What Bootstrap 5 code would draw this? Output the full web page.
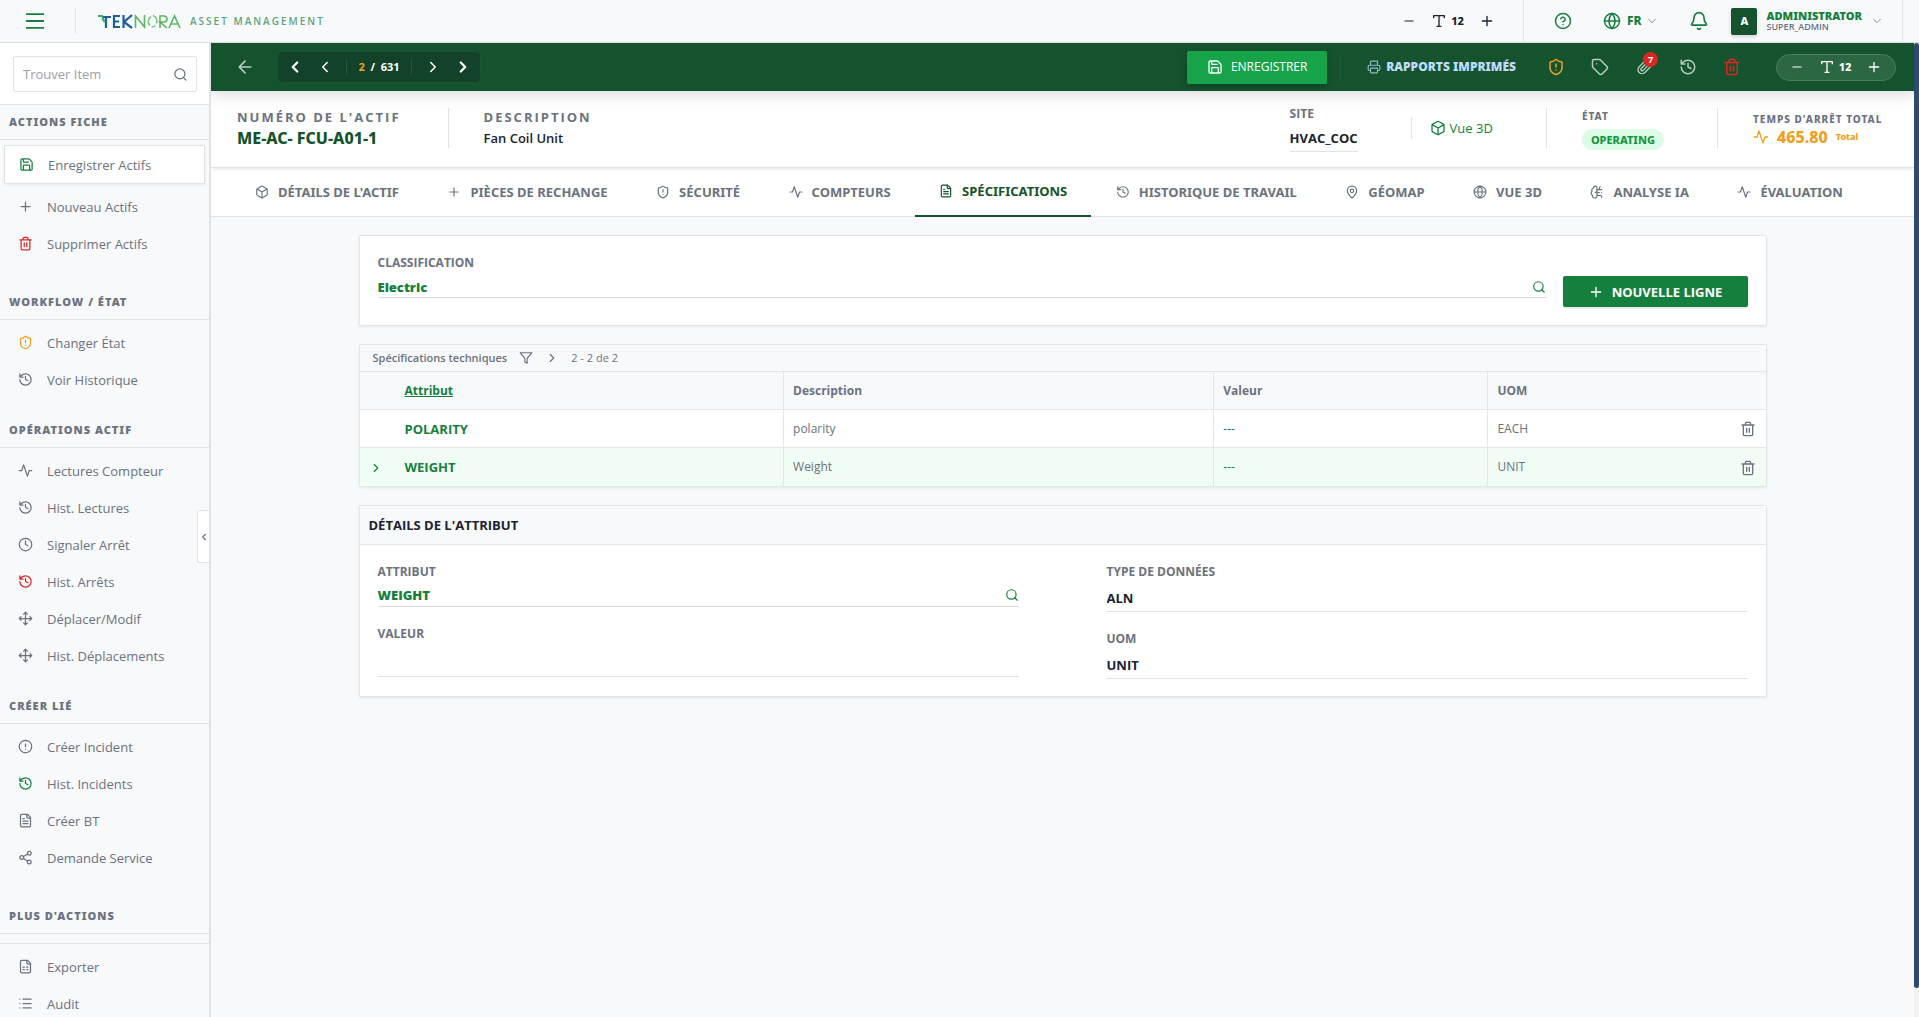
<!DOCTYPE html>
<html lang="fr">
<head>
<meta charset="utf-8">
<meta name="viewport" content="width=device-width, initial-scale=1">
<title>Teknora – Asset Management</title>
<link href="https://cdn.jsdelivr.net/npm/bootstrap@5.3.0/dist/css/bootstrap.min.css" rel="stylesheet">
<style>
:root{--ink:#1a2332;--mute:#6b7280;--line:#dfe3e8;--green:#15803d;--deep:#14532d;--page:#f8f9fb;--amber:#f0a020;--red:#dc2626}
body{font-family:"Open Sans","Noto Sans",sans-serif;font-size:12px;line-height:18px;color:var(--ink);background:var(--page);height:100vh;overflow:hidden}
a{text-decoration:none;color:inherit}
:where(button.plain){border:0;background:none;padding:0;color:inherit;display:inline-flex;align-items:center;justify-content:center;vertical-align:middle}
.ic{width:16px;height:16px;fill:none;stroke:currentColor;stroke-width:2;stroke-linecap:round;stroke-linejoin:round;flex:none}
.ic-s{width:14px;height:14px}.ic-m{width:18px;height:18px}.ic-xs{width:10px;height:10px}.ic-l{width:20px;height:20px}.ic-xl{width:22px;height:22px}
.ic-bold{stroke-width:3}
.vr-line{width:1px;background:var(--line);flex:none}
.green{color:var(--green)}.mute{color:var(--mute)}.deep{color:var(--deep)}.amber{color:var(--amber)}.red{color:var(--red)}
.heavy{font-family:"Noto Sans","Open Sans",sans-serif;font-weight:800}
/* top bar */
.topbar{height:43px;border-bottom:1px solid #d9e0e3;background:var(--page);flex:none}
.menu{width:75px;padding-right:6px!important;flex:none}
.brand{padding-left:22px;gap:8px}
.logo{width:84px;height:16px;flex:none}
.tagline{font-size:10px;font-weight:600;letter-spacing:2px;color:#5fa37c}
.zoomer{gap:15px}.zoomer .heavy{font-size:11px;margin-left:-11px}
.topbar .zoomer{padding-right:28px}
.account{padding:0 20px 0 30px}
.lang{gap:6px;margin:0 32px 0 31px!important}
.profile{margin-left:22px!important;text-align:left}
.avatar{width:26px;height:27px;background:var(--deep);color:#fff;font-size:11px;border-radius:2px;box-shadow:0 2px 4px rgba(0,0,0,.15);margin-right:9px}
.who{line-height:11px;margin-right:10px}.who .heavy{font-size:11px;font-weight:900}.who .mute{font-size:9px;font-weight:600}
/* sidebar */
.side{width:211px;border-right:2px solid var(--line);background:var(--page);flex:none;overflow:hidden;position:relative}
.finder{padding:13px 12px 12px 13px;background:#fff;border-bottom:1px solid var(--line)}
.finder .box{height:36px;border:1px solid var(--line);border-radius:2px;padding:0 8px 0 9px}
.finder input{border:0;outline:0;min-width:0;flex:1;font-size:13px;padding:0;background:none}
.finder input::placeholder{color:#9aa1ab;opacity:1}
.side h2{margin:0;height:35px;line-height:34px;padding-left:9px;border-bottom:1px solid var(--line);font-size:11px;font-family:"Noto Sans",sans-serif;font-weight:900;letter-spacing:1px;color:var(--mute)}
.side ul{list-style:none;margin:0;padding:4px 4px 15px}
.side ul.wide{padding-bottom:23px}
.side li a{display:flex;align-items:center;height:37px;padding-left:14px;gap:14px;font-size:13px;font-weight:500;color:var(--mute)}
.side li a.on{height:39px;margin:1px 0 4px;background:#fff;border:1px solid var(--line);border-radius:2px;box-shadow:0 1px 3px rgba(0,0,0,.08)}
.side .ic{width:15px;height:15px}
.side .ruled{border-top:1px solid var(--line);margin-top:9px}
.fold{position:absolute;right:0;top:467px;width:12px;height:53px;background:#fff;border:1px solid var(--line);border-right:0;border-radius:2px 0 0 2px}
.side .fold .ic{width:10px;height:10px}
/* record bar */
.recbar{height:48px;background:var(--deep);color:#b9ccbf;padding:0 18px 0 24px;flex:none;box-shadow:0 4px 14px rgba(0,0,0,.14);position:relative;z-index:2}
.pager{height:32px;width:204px;background:#12422a;border:1px solid #1d5233;border-radius:5px;margin-left:22px;padding:0 8px;color:#fff;font-size:11px;font-weight:700}
.recbar .vr-line{height:16px;background:#27573a}
.recbar .vr-line.tall{height:26px;margin:0 26px 0 13px}
.save{height:33px;width:140px;background:#16a34a;color:#fff;border:0;border-radius:2px;font-size:12px;box-shadow:0 3px 6px rgba(0,0,0,.2)}
.reports{color:#bfdbfe;gap:5px;margin-right:18px;font-weight:900}.reports .ic{color:#93b5c9}
.tools{margin-right:22px}.tools button{width:44px}
.count{position:absolute;top:-7px;right:8px;width:15px;height:15px;border-radius:8px;background:var(--red);color:#fff;font-size:9px;line-height:15px;font-weight:700;text-align:center}
.pill{height:27px;width:120px;border-radius:14px;background:#2c6743;border:1px solid #4a7e5e;color:#fff}
/* record header */
.rechead{height:77px;background:#fff;border-bottom:1px solid #e0e2e6;padding:0 27px 2px 26px;flex:none;box-shadow:0 1px 4px rgba(0,0,0,.1);position:relative;z-index:1}
.rechead .vr-line{height:40px;margin:0 35px 0 53px}
.rechead .vr-line.first{margin-left:47px}
.rechead .vr-line.short{height:22px;margin-right:18px}
.cap{font-weight:700;letter-spacing:2px;font-size:13px;line-height:21px;color:var(--mute)}
.cap-s{font-family:"Noto Sans",sans-serif;font-weight:800;letter-spacing:1px;font-size:10px;line-height:18px;color:var(--mute)}
.num{font-size:16px;line-height:21px}
.unit{font-size:13px;line-height:21px;font-weight:600}
.site{width:68px}
.view{font-size:13px}
.stop{min-width:134px}
.status{background:#dcfce7;color:#16963f;font-size:11px;line-height:21px;border-radius:10px;padding:0 9px}
.down{font-size:16px;gap:8px}
.down .tot{font-size:9px}
/* tabs */
.rectabs{height:49px;background:#fff;border-bottom:1px solid #e0e2e6;padding:0 47px 0 20px;flex:none}
.rectabs a{height:49px;padding:0 24px 2px;gap:9px;display:flex;align-items:center;font-family:"Noto Sans",sans-serif;font-size:13px;font-weight:700;color:var(--mute);white-space:nowrap}
.rectabs a.on{color:var(--deep);border-bottom:2px solid var(--deep)}
/* content */
.stage{padding:18px}
.wrap{max-width:1408px;margin:0 auto}
.panel{background:#fff;border:1px solid #e3e6ea;border-radius:2px;box-shadow:0 1px 3px rgba(0,0,0,.08);margin-bottom:18px}
.lbl{font-size:12px;font-weight:700;color:var(--mute);line-height:18px;display:block;margin-bottom:4px}
.site .lbl{margin-bottom:2px}
.fld+.lbl,.look+.lbl{margin-top:18px}
.fld{border:0;border-bottom:1px solid var(--line);width:100%;height:27px;font-size:13px;font-weight:700;color:var(--ink);padding:0;background:none;outline:0;border-radius:0}
.fld.tall{height:30px}
.look{border-bottom:1px solid #d5dadf}.look .fld{border:0;height:21px;color:var(--green);font-weight:800}
.classif{padding:18px;gap:17px}
.newline{width:185px;height:31px;background:var(--green);color:#fff;border:0;border-radius:2px;font-weight:700;font-size:13px;margin-top:22px;flex:none;box-shadow:0 1px 3px rgba(0,0,0,.15)}
.bar{height:26px;background:var(--page);padding-left:13px;gap:12px;font-size:11px;color:var(--mute)}
.spec{table-layout:fixed;width:100%;margin:0;font-size:12px}
.spec th,.spec td{height:38px;padding:0 10px 0 9px;border-top:1px solid #e3e6ea;vertical-align:middle}
.spec th+th,.spec td+td{border-left:1px solid #e3e6ea}
.spec tr>.nl.nl{border-left:0}
.spec th{background:var(--page);color:var(--mute);font-weight:700}
.spec td{color:var(--mute)}.spec td.key{color:var(--green);font-weight:700;font-size:13px}.spec td.green{color:var(--green)}
.spec tr.sel td{background:#f0fdf4}
.phead{height:39px;line-height:38px;margin:0;background:var(--page);border-bottom:1px solid #e3e6ea;font-size:13px;font-weight:700;padding-left:9px}
.pair{display:grid;grid-template-columns:1fr 1fr;column-gap:88px;padding:18px 18px 17px}
.scroll{width:5px;background:#f1f1f1;flex:none}.scroll i{display:block;height:97%;background:#2c4a73;border-radius:3px}
</style>
<script src="https://cdn.jsdelivr.net/npm/bootstrap@5.3.0/dist/js/bootstrap.bundle.min.js"></script>
</head>
<body class="d-flex flex-column">
<svg width="0" height="0" class="position-absolute" aria-hidden="true">
<symbol id="menu" viewBox="0 0 24 24"><path d="M3 4.500h18M3 12h18M3 19.500h18"/></symbol>
<symbol id="minus" viewBox="0 0 24 24"><path d="M5 12h14"/></symbol>
<symbol id="plus" viewBox="0 0 24 24"><path d="M5 12h14M12 5v14"/></symbol>
<symbol id="type" viewBox="0 0 24 24"><path d="M4 7V4h16v3M9 20h6M12 4v16"/></symbol>
<symbol id="help" viewBox="0 0 24 24"><circle cx="12" cy="12" r="10"/><path d="M9.1 9a3 3 0 0 1 5.8 1c0 2-3 3-3 3M12 17h.01"/></symbol>
<symbol id="globe" viewBox="0 0 24 24"><circle cx="12" cy="12" r="10"/><path d="M12 2a14.5 14.5 0 0 0 0 20 14.5 14.5 0 0 0 0-20M2 12h20"/></symbol>
<symbol id="cd" viewBox="0 0 24 24"><path d="m4 8 8 8 8-8"/></symbol>
<symbol id="cl" viewBox="0 0 24 24"><path d="m15 18-6-6 6-6"/></symbol>
<symbol id="cr" viewBox="0 0 24 24"><path d="m9 18 6-6-6-6"/></symbol>
<symbol id="bell" viewBox="0 0 24 24"><path d="M10.3 21a2 2 0 0 0 3.4 0M3.3 15.3A1 1 0 0 0 4 17h16a1 1 0 0 0 .7-1.7C19.400 14 18 12.500 18 8A6 6 0 0 0 6 8c0 4.500-1.400 6-2.700 7.300"/></symbol>
<symbol id="search" viewBox="0 0 24 24"><circle cx="11" cy="11" r="8"/><path d="m21 21-4.300-4.300"/></symbol>
<symbol id="save" viewBox="0 0 24 24"><path d="M15.200 3a2 2 0 0 1 1.400.6l3.800 3.800a2 2 0 0 1 .6 1.400V19a2 2 0 0 1-2 2H5a2 2 0 0 1-2-2V5a2 2 0 0 1 2-2zM17 21v-7a1 1 0 0 0-1-1H8a1 1 0 0 0-1 1v7M7 3v4a1 1 0 0 0 1 1h7"/></symbol>
<symbol id="trash" viewBox="0 0 24 24"><path d="M3 6h18M19 6v14a2 2 0 0 1-2 2H7a2 2 0 0 1-2-2V6M8 6V4a2 2 0 0 1 2-2h4a2 2 0 0 1 2 2v2M10 11v6M14 11v6"/></symbol>
<symbol id="shield" viewBox="0 0 24 24"><path d="M20 13c0 5-3.500 7.500-7.700 9a1 1 0 0 1-.6 0C7.500 20.500 4 18 4 13V6a1 1 0 0 1 1-1c2 0 4.500-1.200 6.200-2.700a1.200 1.200 0 0 1 1.600 0C14.500 3.800 17 5 19 5a1 1 0 0 1 1 1zM12 8v4M12 16h.01"/></symbol>
<symbol id="hist" viewBox="0 0 24 24"><path d="M3 12a9 9 0 1 0 9-9 9.800 9.800 0 0 0-6.700 2.700L3 8M3 3v5h5M12 7v5l4 2"/></symbol>
<symbol id="pulse" viewBox="0 0 24 24"><path d="M22 12h-4l-3 9L9 3l-3 9H2"/></symbol>
<symbol id="clock" viewBox="0 0 24 24"><circle cx="12" cy="12" r="10"/><path d="M12 6v6l4 2"/></symbol>
<symbol id="move" viewBox="0 0 24 24"><path d="M12 2v20M2 12h20M15 19l-3 3-3-3M19 9l3 3-3 3M5 9l-3 3 3 3M9 5l3-3 3 3"/></symbol>
<symbol id="alert" viewBox="0 0 24 24"><circle cx="12" cy="12" r="10"/><path d="M12 8v4M12 16h.01"/></symbol>
<symbol id="file" viewBox="0 0 24 24"><path d="M15 2H6a2 2 0 0 0-2 2v16a2 2 0 0 0 2 2h12a2 2 0 0 0 2-2V7zM14 2v4a2 2 0 0 0 2 2h4M10 9H8M16 13H8M16 17H8"/></symbol>
<symbol id="sheet" viewBox="0 0 24 24"><path d="M15 2H6a2 2 0 0 0-2 2v16a2 2 0 0 0 2 2h12a2 2 0 0 0 2-2V7zM14 2v4a2 2 0 0 0 2 2h4M8 13h2M14 13h2M8 17h2M14 17h2"/></symbol>
<symbol id="share" viewBox="0 0 24 24"><circle cx="18" cy="5" r="3"/><circle cx="6" cy="12" r="3"/><circle cx="18" cy="19" r="3"/><path d="m8.600 13.500 6.800 4M15.400 6.500l-6.800 4"/></symbol>
<symbol id="list" viewBox="0 0 24 24"><path d="M3 5h.01M3 12h.01M3 19h.01M8 5h13M8 12h13M8 19h13"/></symbol>
<symbol id="back" viewBox="0 0 24 24"><path d="m12 19-7-7 7-7M19 12H5"/></symbol>
<symbol id="print" viewBox="0 0 24 24"><path d="M6 18H4a2 2 0 0 1-2-2v-5a2 2 0 0 1 2-2h16a2 2 0 0 1 2 2v5a2 2 0 0 1-2 2h-2M6 9V3a1 1 0 0 1 1-1h10a1 1 0 0 1 1 1v6M7 14h10a1 1 0 0 1 1 1v6a1 1 0 0 1-1 1H7a1 1 0 0 1-1-1v-6a1 1 0 0 1 1-1"/></symbol>
<symbol id="tag" viewBox="0 0 24 24"><path d="M12.600 2.600A2 2 0 0 0 11.200 2H4a2 2 0 0 0-2 2v7.200a2 2 0 0 0 .6 1.400l8.700 8.700a2.400 2.400 0 0 0 3.400 0l6.600-6.600a2.400 2.400 0 0 0 0-3.400zM7.500 7.500h.01"/></symbol>
<symbol id="clip" viewBox="0 0 24 24"><path d="m16 6-8.400 8.600a2 2 0 0 0 2.800 2.800l8.400-8.600a4 4 0 1 0-5.600-5.600l-8.400 8.500a6 6 0 1 0 8.500 8.500l8.400-8.600"/></symbol>
<symbol id="box" viewBox="0 0 24 24"><path d="M21 8a2 2 0 0 0-1-1.700l-7-4a2 2 0 0 0-2 0l-7 4A2 2 0 0 0 3 8v8a2 2 0 0 0 1 1.700l7 4a2 2 0 0 0 2 0l7-4a2 2 0 0 0 1-1.700zM3.300 7l8.700 5 8.700-5M12 22V12"/></symbol>
<symbol id="pin" viewBox="0 0 24 24"><path d="M20 10c0 5-5.500 10.200-7.400 11.800a1 1 0 0 1-1.200 0C9.500 20.200 4 15 4 10a8 8 0 0 1 16 0"/><circle cx="12" cy="10" r="3"/></symbol>
<symbol id="brain" viewBox="0 0 24 24"><path d="M12 5a3 3 0 1 0-6 .1 4 4 0 0 0-2.500 5.800 4 4 0 0 0 .6 6.600A4 4 0 1 0 12 18zM9 13a4.500 4.500 0 0 0 3-4M12 13h4M12 18h6a2 2 0 0 1 2 2v1M12 8h8M16 8V5a2 2 0 0 1 2-2M16 13h.01M20 13h.01"/></symbol>
<symbol id="funnel" viewBox="0 0 24 24"><path d="M22 3H2l8 9.500V19l4 2v-8.500z"/></symbol>
</svg>

<header class="topbar d-flex align-items-stretch">
  <button class="plain menu green" aria-label="Menu"><svg class="ic ic-xl"><use href="#menu"/></svg></button>
  <div class="vr-line my-2"></div>
  <div class="brand d-flex align-items-center flex-grow-1">
    <svg class="logo" viewBox="0 0 84 16" fill="none" role="img" aria-label="Teknora"><g stroke="#1f5f9f" stroke-width="2.200"><path d="M4 4h9M8 4v11"/><path d="M22 3h-6v11h6M16 8.500h5M25.500 2v13M34 2l-8 7 8 6"/></g><path stroke="#3fae6a" stroke-width="2.200" d="M0 3h5M4 5l3 4"/><g stroke="#5cb660" stroke-width="1.600"><path d="M37.500 15V3l9 11V2M62 15V3h4a3 3 0 0 1 0 6h-4l7 6M71 15l5.500-12L82 15M73 11h7"/><path stroke="#7cc47e" d="M53 3.500a6 6 0 0 0-1 9M55 2.500a6 6 0 0 1 3.500 8M57.500 12.500a6 6 0 0 1-4 1.500"/></g></svg>
    <span class="tagline">ASSET MANAGEMENT</span>
  </div>
  <div class="zoomer d-flex align-items-center">
    <button class="plain" aria-label="Réduire"><svg class="ic ic-s"><use href="#minus"/></svg></button>
    <svg class="ic"><use href="#type"/></svg><span class="heavy">12</span>
    <button class="plain" aria-label="Agrandir"><svg class="ic"><use href="#plus"/></svg></button>
  </div>
  <div class="vr-line"></div>
  <div class="account d-flex align-items-center green">
    <button class="plain" aria-label="Aide"><svg class="ic ic-m"><use href="#help"/></svg></button>
    <button class="plain lang"><svg class="ic ic-m"><use href="#globe"/></svg><span class="heavy">FR</span><svg class="ic ic-xs mute"><use href="#cd"/></svg></button>
    <button class="plain" aria-label="Notifications"><svg class="ic ic-l"><use href="#bell"/></svg></button>
    <button class="plain profile"><span class="avatar heavy d-flex align-items-center justify-content-center">A</span><span class="who d-flex flex-column"><span class="heavy">ADMINISTRATOR</span><span class="mute">SUPER_ADMIN</span></span><svg class="ic ic-xs mute"><use href="#cd"/></svg></button>
  </div>
  <div class="vr-line me-3"></div>
</header>

<div class="d-flex flex-grow-1 overflow-hidden">
<aside class="side">
  <div class="finder"><div class="box d-flex align-items-center"><input type="search" aria-label="Trouver Item" placeholder="Trouver Item"><svg class="ic mute"><use href="#search"/></svg></div></div>
  <h2>ACTIONS FICHE</h2>
  <ul class="wide">
    <li><a href="#" class="on"><svg class="ic green"><use href="#save"/></svg>Enregistrer Actifs</a></li>
    <li><a href="#"><svg class="ic"><use href="#plus"/></svg>Nouveau Actifs</a></li>
    <li><a href="#"><svg class="ic red"><use href="#trash"/></svg>Supprimer Actifs</a></li>
  </ul>
  <h2>WORKFLOW / ÉTAT</h2>
  <ul>
    <li><a href="#"><svg class="ic amber"><use href="#shield"/></svg>Changer État</a></li>
    <li><a href="#"><svg class="ic"><use href="#hist"/></svg>Voir Historique</a></li>
  </ul>
  <h2>OPÉRATIONS ACTIF</h2>
  <ul>
    <li><a href="#"><svg class="ic"><use href="#pulse"/></svg>Lectures Compteur</a></li>
    <li><a href="#"><svg class="ic"><use href="#hist"/></svg>Hist. Lectures</a></li>
    <li><a href="#"><svg class="ic"><use href="#clock"/></svg>Signaler Arrêt</a></li>
    <li><a href="#"><svg class="ic red"><use href="#hist"/></svg>Hist. Arrêts</a></li>
    <li><a href="#"><svg class="ic"><use href="#move"/></svg>Déplacer/Modif</a></li>
    <li><a href="#"><svg class="ic"><use href="#move"/></svg>Hist. Déplacements</a></li>
  </ul>
  <h2>CRÉER LIÉ</h2>
  <ul class="wide">
    <li><a href="#"><svg class="ic"><use href="#alert"/></svg>Créer Incident</a></li>
    <li><a href="#"><svg class="ic green"><use href="#hist"/></svg>Hist. Incidents</a></li>
    <li><a href="#"><svg class="ic"><use href="#file"/></svg>Créer BT</a></li>
    <li><a href="#"><svg class="ic"><use href="#share"/></svg>Demande Service</a></li>
  </ul>
  <h2>PLUS D'ACTIONS</h2>
  <ul class="ruled">
    <li><a href="#"><svg class="ic"><use href="#sheet"/></svg>Exporter</a></li>
    <li><a href="#"><svg class="ic"><use href="#list"/></svg>Audit</a></li>
  </ul>
  <button class="plain fold mute" aria-label="Replier"><svg class="ic ic-bold"><use href="#cl"/></svg></button>
</aside>

<main class="flex-grow-1 d-flex flex-column overflow-hidden">
  <div class="recbar d-flex align-items-center">
    <button class="plain" aria-label="Retour"><svg class="ic ic-l"><use href="#back"/></svg></button>
    <div class="pager d-flex align-items-center justify-content-between">
      <button class="plain" aria-label="Premier"><svg class="ic ic-m ic-bold"><use href="#cl"/></svg></button>
      <button class="plain" aria-label="Précédent"><svg class="ic ic-m"><use href="#cl"/></svg></button>
      <span class="vr-line"></span>
      <span><span class="amber">2</span>&nbsp; / &nbsp;631</span>
      <span class="vr-line"></span>
      <button class="plain" aria-label="Suivant"><svg class="ic ic-m"><use href="#cr"/></svg></button>
      <button class="plain" aria-label="Dernier"><svg class="ic ic-m ic-bold"><use href="#cr"/></svg></button>
    </div>
    <button class="save ms-auto d-flex align-items-center justify-content-center gap-2"><svg class="ic"><use href="#save"/></svg>ENREGISTRER</button>
    <span class="vr-line tall"></span>
    <a href="#" class="reports heavy d-flex align-items-center"><svg class="ic ic-s"><use href="#print"/></svg>RAPPORTS IMPRIMÉS</a>
    <div class="tools d-flex align-items-center">
      <button class="plain amber" aria-label="Changer état"><svg class="ic ic-m"><use href="#shield"/></svg></button>
      <button class="plain" aria-label="Étiquette"><svg class="ic ic-m"><use href="#tag"/></svg></button>
      <button class="plain position-relative" aria-label="Pièces jointes"><svg class="ic"><use href="#clip"/></svg><span class="count">7</span></button>
      <button class="plain" aria-label="Historique"><svg class="ic ic-m"><use href="#hist"/></svg></button>
      <button class="plain red" aria-label="Supprimer"><svg class="ic ic-m"><use href="#trash"/></svg></button>
    </div>
    <div class="pill zoomer d-flex align-items-center justify-content-center">
      <button class="plain" aria-label="Réduire"><svg class="ic ic-s"><use href="#minus"/></svg></button>
      <svg class="ic"><use href="#type"/></svg><span class="heavy">12</span>
      <button class="plain" aria-label="Agrandir"><svg class="ic"><use href="#plus"/></svg></button>
    </div>
  </div>

  <div class="rechead d-flex align-items-center">
    <div><div class="cap">NUMÉRO DE L'ACTIF</div><div class="num heavy deep">ME-AC- FCU-A01-1</div></div>
    <div class="vr-line first"></div>
    <div class="me-auto"><div class="cap">DESCRIPTION</div><div class="unit">Fan Coil Unit</div></div>
    <div class="site"><label class="lbl" for="site">SITE</label><input class="fld" id="site" value="HVAC_COC" readonly></div>
    <div class="vr-line short"></div>
    <a href="#" class="view green d-flex align-items-center gap-1"><svg class="ic"><use href="#box"/></svg>Vue 3D</a>
    <div class="vr-line"></div>
    <div><div class="cap-s mb-1">ÉTAT</div><div class="status heavy">OPERATING</div></div>
    <div class="vr-line"></div>
    <div class="stop"><div class="cap-s">TEMPS D'ARRÊT TOTAL</div><div class="down heavy amber d-flex align-items-center"><svg class="ic"><use href="#pulse"/></svg>465.80<span class="tot">Total</span></div></div>
  </div>

  <nav class="rectabs d-flex justify-content-between">
    <a href="#"><svg class="ic ic-s"><use href="#box"/></svg>DÉTAILS DE L'ACTIF</a>
    <a href="#"><svg class="ic ic-s"><use href="#plus"/></svg>PIÈCES DE RECHANGE</a>
    <a href="#"><svg class="ic ic-s"><use href="#shield"/></svg>SÉCURITÉ</a>
    <a href="#"><svg class="ic ic-s"><use href="#pulse"/></svg>COMPTEURS</a>
    <a href="#" class="on"><svg class="ic ic-s"><use href="#file"/></svg>SPÉCIFICATIONS</a>
    <a href="#"><svg class="ic ic-s"><use href="#hist"/></svg>HISTORIQUE DE TRAVAIL</a>
    <a href="#"><svg class="ic ic-s"><use href="#pin"/></svg>GÉOMAP</a>
    <a href="#"><svg class="ic ic-s"><use href="#globe"/></svg>VUE 3D</a>
    <a href="#"><svg class="ic ic-s"><use href="#brain"/></svg>ANALYSE IA</a>
    <a href="#"><svg class="ic ic-s"><use href="#pulse"/></svg>ÉVALUATION</a>
  </nav>

  <div class="stage"><div class="wrap">
    <section class="panel classif d-flex align-items-start">
      <div class="flex-grow-1">
        <label class="lbl" for="classif">CLASSIFICATION</label>
        <div class="look d-flex align-items-center"><input class="fld" id="classif" value="Electric"><button class="plain green" aria-label="Rechercher une classification"><svg class="ic ic-s"><use href="#search"/></svg></button></div>
      </div>
      <button class="newline d-flex align-items-center justify-content-center gap-2"><svg class="ic"><use href="#plus"/></svg>NOUVELLE LIGNE</button>
    </section>

    <section class="panel">
      <div class="bar d-flex align-items-center"><span class="fw-semibold">Spécifications techniques</span><svg class="ic ic-s"><use href="#funnel"/></svg><svg class="ic ic-s"><use href="#cr"/></svg><span>2 - 2 de 2</span></div>
      <table class="spec">
        <colgroup><col style="width:36px"><col style="width:27.6%"><col style="width:30.6%"><col style="width:19.5%"><col><col style="width:60px"></colgroup>
        <thead><tr><th></th><th class="nl"><a href="#" class="green text-decoration-underline">Attribut</a></th><th>Description</th><th>Valeur</th><th>UOM</th><th class="nl"></th></tr></thead>
        <tbody>
          <tr><td></td><td class="nl key">POLARITY</td><td>polarity</td><td class="green">---</td><td>EACH</td><td class="nl text-end"><button class="plain mute" aria-label="Supprimer POLARITY"><svg class="ic"><use href="#trash"/></svg></button></td></tr>
          <tr class="sel"><td><svg class="ic ic-s green"><use href="#cr"/></svg></td><td class="nl key">WEIGHT</td><td>Weight</td><td class="green">---</td><td>UNIT</td><td class="nl text-end"><button class="plain mute" aria-label="Supprimer WEIGHT"><svg class="ic"><use href="#trash"/></svg></button></td></tr>
        </tbody>
      </table>
    </section>

    <section class="panel">
      <h3 class="phead">DÉTAILS DE L'ATTRIBUT</h3>
      <div class="pair">
        <div>
          <label class="lbl" for="attr">ATTRIBUT</label>
          <div class="look d-flex align-items-center"><input class="fld" id="attr" value="WEIGHT"><button class="plain green" aria-label="Rechercher un attribut"><svg class="ic ic-s"><use href="#search"/></svg></button></div>
          <label class="lbl" for="val">VALEUR</label>
          <input class="fld tall" id="val" value="">
        </div>
        <div>
          <label class="lbl" for="dtype">TYPE DE DONNÉES</label>
          <input class="fld" id="dtype" value="ALN" readonly>
          <label class="lbl" for="uom">UOM</label>
          <input class="fld" id="uom" value="UNIT" readonly>
        </div>
      </div>
    </section>
  </div></div>
</main>
<div class="scroll"><i></i></div>
</div>
</body>
</html>
